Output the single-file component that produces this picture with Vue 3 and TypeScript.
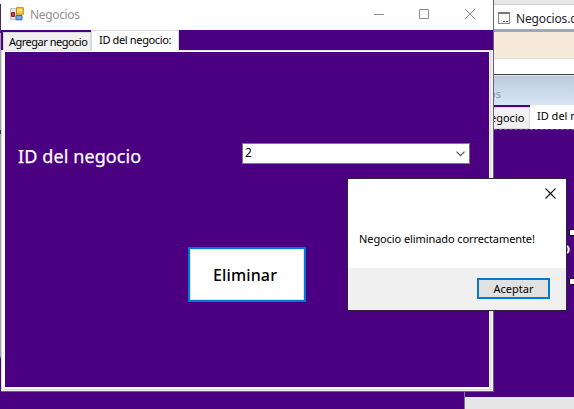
<script setup lang="ts">
import { ref } from 'vue'

const title = 'Negocios'
const tabs = ['Agregar negocio', 'ID del negocio:']
const active = ref(1)
const selectedId = ref('2')
const dialogOpen = ref(true)
</script>

<template>
  <main class="desktop">
    <div class="edge"></div>
    <section class="designer">
      <div class="ide-top"></div>
      <div class="ide-tab">
        <svg width="12" height="12" viewBox="0 0 12 12" shape-rendering="crispEdges">
          <path d="M.5 .5H11.5V11.5H.5Z" fill="#f7f7f7" stroke="#85858d" />
          <path d="M0 0H12V2H0Z" fill="#77777f" />
          <path d="M5 9H7V10H5ZM8 9H10V10H8Z" fill="#55555c" />
        </svg>
        <span>Negocios.cs</span>
      </div>
      <div class="ide-cream"></div>
      <div class="ide-gap"></div>
      <div class="form-title"><span>os</span></div>
      <div class="form-tabs">
        <div class="form-tab off"><span>egocio</span></div>
        <div class="form-tab on"><span>ID del negocio:</span></div>
      </div>
      <div class="form-body"></div>
    </section>
    <div class="ide-bottom"></div>
    <span class="clip">o</span>
    <i class="handle h1"></i>
    <i class="handle h2"></i>

    <section class="window">
      <header class="titlebar">
        <svg class="app" width="14" height="14" viewBox="0 0 14 14">
          <path d="M.5 1.500H7V12.500H.5Z" fill="#e4e4e4" stroke="#c4c4c4" />
          <path d="M1.500 5.500H4.500V9.500H1.500Z" fill="#d8392c" stroke="#a31d18" />
          <path d="M6.500 .7H13.300V7.200H6.500Z" fill="#ffce3b" stroke="#b98b12" />
          <path d="M7.500 2H12V4H7.500Z" fill="#ffe58b" />
          <path d="M6 8.500H12V12.800H6Z" fill="#6fa2ea" stroke="#3768b8" />
        </svg>
        <h1>{{ title }}</h1>
        <svg class="controls" width="104" height="12" viewBox="0 0 104 12" fill="none" stroke="#8f8f8f">
          <path d="M0 6.500H10" />
          <path d="M45.500 1.500H54.500V10.500H45.500Z" />
          <path d="M91 1L101 11M101 1L91 11" />
        </svg>
      </header>
      <nav class="tabs">
        <div v-for="(tab, i) in tabs" :key="tab" class="tab" :class="{ active: i === active }" @click="active = i">
          <span :class="'label' + i">{{ tab }}</span>
        </div>
      </nav>
      <div class="frame">
        <div class="page">
          <div class="field">
            <label>ID del negocio</label>
            <div class="combo">
              <span>{{ selectedId }}</span>
              <svg width="9" height="6" viewBox="0 0 9 6" fill="none" stroke="#555" stroke-width="1.200"><path d="M.5 .7L4.500 4.700L8.500 .7" /></svg>
            </div>
          </div>
          <button class="delete" @click="dialogOpen = true"><span>Eliminar</span></button>
        </div>
      </div>
    </section>

    <section v-if="dialogOpen" class="dialog">
      <div class="message">
        <svg width="11" height="11" viewBox="0 0 11 11" stroke="#111" stroke-width="1.100" @click="dialogOpen = false"><path d="M.5 .5L10.500 10.500M10.500 .5L.5 10.500" /></svg>
        <p>Negocio eliminado correctamente!</p>
      </div>
      <footer><button @click="dialogOpen = false"><span>Aceptar</span></button></footer>
    </section>
  </main>
</template>

<style>
body { margin: 0; overflow: hidden; }
</style>

<style scoped>
* { box-sizing: border-box; }
.desktop { position: relative; width: 574px; height: 409px; overflow: hidden; background: #4b0082; font: 11px/14px "Noto Sans", "Open Sans", sans-serif; color: #000; }
span, label, h1, p { white-space: nowrap; }
button { padding: 0; border-radius: 0; font: inherit; color: #000; }
svg { display: block; flex: none; }
.edge { position: absolute; left: 0; top: 0; width: 1px; height: 358px; background: linear-gradient(#fff 4px, #4b2768 4px 33px, #a5a5a5 33px 130px, #3e2855 130px 134px, #a5a5a5 134px 356px, #777 356px); }
.designer { position: absolute; left: 494px; top: 0; width: 80px; height: 397px; overflow: hidden; }
.ide-top { height: 5px; background: #e7e7e7; border-bottom: 1px solid #ccc; }
.ide-tab { height: 24px; background: #fff; display: flex; align-items: center; padding: 3px 0 0 4px; gap: 6px; font-size: 12px; color: #24242c; letter-spacing: -.15px; }
.ide-tab svg { margin-top: -1px; }
.ide-cream { height: 30px; background: #f8eadb; border-top: 3px solid #9ba9b9; border-bottom: 1px solid #ddd; }
.ide-gap { height: 16px; background: #fff; border-bottom: 1px solid #444; }
.form-title { height: 30px; border-top: 1px solid #dce4eb; background: linear-gradient(#bccbdc, #d8e5f3); color: #919ba5; padding-top: 11px; }
.form-title span { margin-left: -5px; }
.form-tabs { display: flex; height: 24px; background: #4b0082; }
.form-tab { flex: none; background: #fff; }
.form-tab.off { width: 36px; margin-top: 2px; height: 22px; background: #f0f0f0; border: 1px solid #d9d9d9; border-left: 0; padding-top: 3px; }
.form-tab.off span { margin-left: -4px; }
.form-tab.on { width: 90px; padding: 4px 0 0 7px; }
.form-body { height: 268px; border-top: 1px dashed #7950a0; }
.ide-bottom { position: absolute; left: 464px; top: 391px; width: 110px; height: 18px; border-left: 1px solid #777; background: linear-gradient(#4b0082 6px, #e7e7e7 6px); }
.clip { position: absolute; left: 560px; top: 237px; color: #fff; font-size: 17px; line-height: 22px; font-weight: 500; }
.handle { position: absolute; left: 569px; width: 7px; height: 7px; background: #fff; border: 1px solid #000; border-radius: 1px; }
.h1 { top: 229px; }
.h2 { top: 278px; }
.window { position: absolute; left: 1px; top: 0; width: 493px; height: 392px; background: #4b0082; border-right: 1px solid #68607a; border-bottom: 1px solid #68607a; display: flex; flex-direction: column; }
.titlebar { height: 30px; flex: none; display: flex; align-items: center; background: #fff; padding: 0 15px 0 9px; }
.app { margin-top: -2px; }
h1 { margin: 0 auto 0 6px; font-size: 12px; line-height: 16px; font-weight: 400; color: #929292; letter-spacing: -.35px; }
.controls { margin-top: -2px; }
.tabs { height: 20px; flex: none; display: flex; padding-left: 2px; }
.tab { width: 88px; height: 18px; margin-top: 2px; background: #f0f0f0; border: 1px solid #d9d9d9; border-bottom: 0; padding: 2px 0 0 5px; }
.tab.active { height: 21px; margin-top: 0; background: #fff; position: relative; padding-left: 7px; padding-top: 2px; }
.label0 { letter-spacing: -.5px; }
.label1 { letter-spacing: -.35px; }
.frame { flex: 1; display: flex; background: #f0f0f0; padding: 0 2px 1px 0; }
.page { flex: 1; border: 1px solid #d9d9d9; border-top-color: #e6e6e6; background: #4b0082; box-shadow: inset 3px 1px #fff, inset -1px -2px #fff; }
.field { display: flex; padding: 92px 20px 0 16px; height: 113px; justify-content: space-between; }
label { color: #fff; font-size: 18px; line-height: 26px; letter-spacing: .1px; -webkit-text-stroke: .25px #fff; }
.combo { width: 228px; height: 21px; background: #fff; border: 1px solid #7a7a7a; display: flex; align-items: center; justify-content: space-between; padding: 0 4px 1px 2px; font-size: 12px; }
.combo svg { margin-top: 1px; }
.delete { display: block; width: 118px; height: 55px; margin: 83px 0 0 186px; border: 2px solid #0078d7; box-shadow: inset 0 0 0 1px #e1e1e1; background: #fff; font-size: 16px; font-weight: 500; letter-spacing: .15px; }
.delete span { position: relative; left: -2px; }
.dialog { position: absolute; left: 347px; top: 178px; width: 220px; height: 133px; border: 1px solid #2b2635; background: #fff; }
.message { height: 89px; padding: 9px 10px 0 11px; }
.message svg { margin-left: auto; }
.message p { margin: 33px 0 0; letter-spacing: -.09px; }
.dialog footer { height: 42px; background: #f0f0f0; display: flex; justify-content: flex-end; padding: 10px 16px; }
.dialog button { width: 73px; height: 21px; background: #e1e1e1; border: 2px solid #0078d7; }
</style>
